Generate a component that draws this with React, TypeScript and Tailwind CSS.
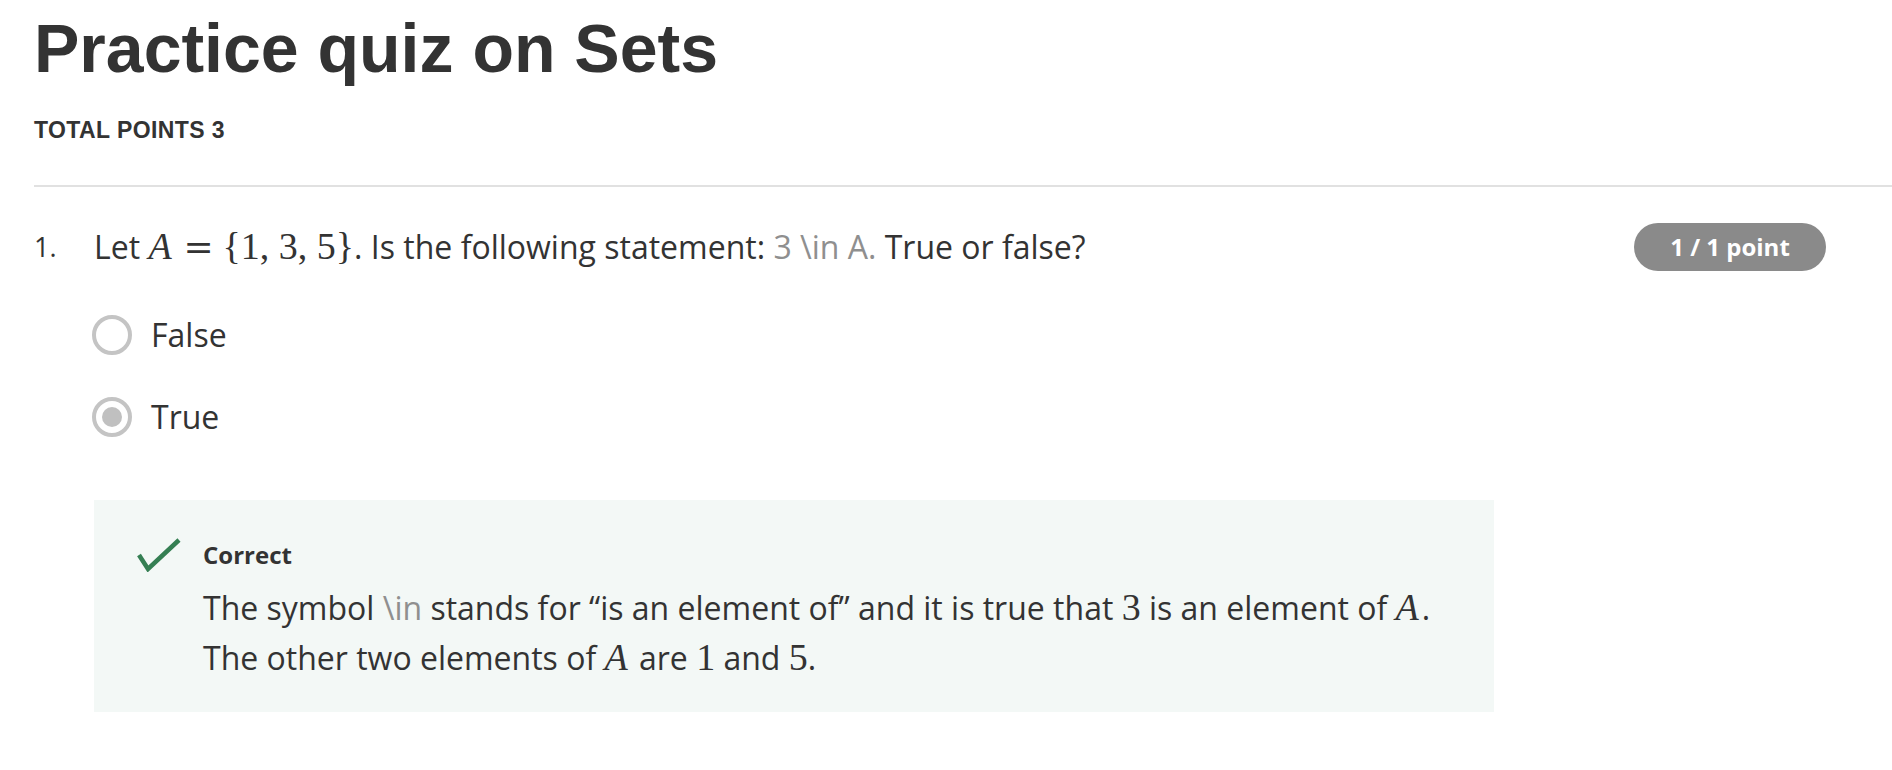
import React from 'react';

const M: React.FC<{ children: React.ReactNode; italic?: boolean }> = ({ children, italic }) => (
  <span className={`font-['Liberation_Serif',serif] text-[38px] leading-none ${italic ? 'italic pr-[3px]' : ''}`}>{children}</span>
);

const Radio: React.FC<{ label: string; checked?: boolean }> = ({ label, checked }) => (
  <div className="flex items-center h-10">
    <div className="w-10 h-10 rounded-full border-[4px] border-[#c4c4c4] flex items-center justify-center shrink-0">
      {checked ? <div className="w-5 h-5 rounded-full bg-[#c0c0c0]" /> : null}
    </div>
    <span className="ml-[19px] text-[32px] leading-10">{label}</span>
  </div>
);

const App: React.FC = () => {
  return (
    <div className="min-h-screen bg-white text-[#333333] font-['Open_Sans',sans-serif]">
      <div className="pl-[34px]">
        <h1 className="pt-[14px] font-['Liberation_Sans',Arial,sans-serif] font-bold text-[68px] leading-[68px]">
          Practice quiz on Sets
        </h1>
        <div className="mt-[36px] font-['Liberation_Sans',Arial,sans-serif] font-bold text-[23px] leading-6 tracking-[0.4px]">
          TOTAL POINTS 3
        </div>
        <div className="mt-[43px] h-[2px] bg-[#e1e1e1]" />

        <div className="mt-[36px] flex items-center pr-[66px]">
          <div className="w-[60px] shrink-0 text-[27px] leading-10">1.</div>
          <div className="flex-1 text-[32px] leading-10 whitespace-nowrap">
            Let <M italic>A</M>
            <span className="inline-block w-[32px] mx-[8px] text-center font-['DejaVu_Serif',serif] text-[36px] font-light leading-none">=</span>
            <M>{'{1, 3, 5}'}</M>. Is the following statement:{' '}
            <span className="text-[#8f8f8f]">3 \in A.</span> True or false?
          </div>
          <div className="h-12 w-[192px] rounded-full bg-[#8a8a8a] text-white font-bold text-[24px] flex items-center justify-center">
            1 / 1 point
          </div>
        </div>

        <div className="ml-[58px] mt-[44px] flex flex-col gap-[42px]">
          <Radio label="False" />
          <Radio label="True" checked />
        </div>

        <div className="ml-[60px] mt-[63px] w-[1400px] h-[212px] bg-[#f3f8f6] pl-[43px] pt-[39px] flex">
          <svg width="44" height="34" viewBox="0 0 44 34" className="shrink-0 -mt-[1px]">
            <polyline points="2,17 11,31 42,2" fill="none" stroke="#357f53" strokeWidth="4.5" />
          </svg>
          <div className="ml-[22px]">
            <div className="font-bold text-[24px] leading-8">Correct</div>
            <div className="mt-[12px] text-[32px] leading-[50px]">
              <div>
                The symbol <span className="text-[#8f8f8f]">\in</span> stands for “is an element of” and it is true that{' '}
                <M>3</M> is an element of <M italic>A</M>.
              </div>
              <div>
                The other two elements of <M italic>A</M> are <M>1</M> and <M>5</M>.
              </div>
            </div>
          </div>
        </div>
      </div>
    </div>
  );
};

export default App;
